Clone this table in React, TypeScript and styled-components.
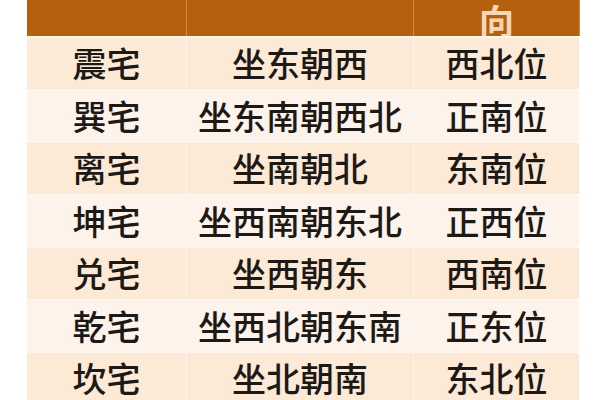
import React from "react";
import styled, { createGlobalStyle } from "styled-components";

const GlobalStyle = createGlobalStyle`
  html, body {
    margin: 0;
    padding: 0;
    background: #ffffff;
  }
  body {
    font-family: "Noto Sans CJK SC", "Noto Sans", sans-serif;
  }
`;

const Page = styled.div`
  width: 600px;
  height: 400px;
  overflow: hidden;
  padding-left: 27px;
  box-sizing: border-box;
`;

const Table = styled.div`
  width: 550px;
  display: grid;
  grid-template-columns: 159px 226px 165px;
  grid-auto-rows: 50.5px;
  grid-template-rows: 36px;
  column-gap: 1px;
  row-gap: 2px;
  background: #fdf4ec;
`;

const HeadCell = styled.div`
  background: #b5600f;
  color: #f7d7b8;
  font-size: 35px;
  font-weight: 700;
  line-height: 30px;
  height: 36px;
  display: flex;
  align-items: flex-end;
  justify-content: center;
  overflow: hidden;
  box-shadow: 1px 0 0 #d68745;
`;

const HeadText = styled.span`
  display: block;
  padding-bottom: 1px;
`;

const Cell = styled.div<{ $shade: boolean }>`
  background: ${(p) => (p.$shade ? "#fce9d6" : "#fdf3ea")};
  color: #1c1916;
  font-size: 34px;
  font-weight: 500;
  line-height: 1;
  display: flex;
  align-items: center;
  justify-content: center;
  white-space: nowrap;
`;

const rows = [
  ["震宅", "坐东朝西", "西北位"],
  ["巽宅", "坐东南朝西北", "正南位"],
  ["离宅", "坐南朝北", "东南位"],
  ["坤宅", "坐西南朝东北", "正西位"],
  ["兑宅", "坐西朝东", "西南位"],
  ["乾宅", "坐西北朝东南", "正东位"],
  ["坎宅", "坐北朝南", "东北位"],
];

const App = () => {
  return (
    <Page>
      <GlobalStyle />
      <Table>
        <HeadCell />
        <HeadCell />
        <HeadCell>
          <HeadText>向</HeadText>
        </HeadCell>
        {rows.map((row, i) =>
          row.map((text, j) => (
            <Cell key={`${i}-${j}`} $shade={i % 2 === 0}>
              {text}
            </Cell>
          ))
        )}
      </Table>
    </Page>
  );
};

export default App;
